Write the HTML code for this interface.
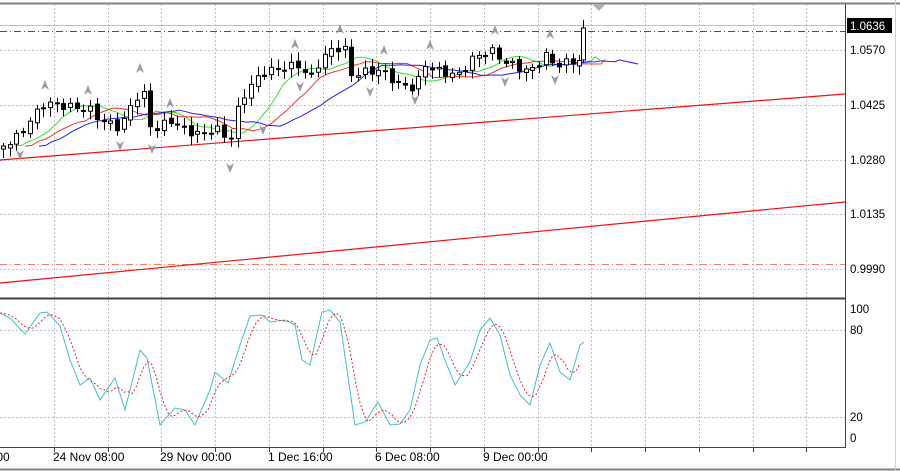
<!DOCTYPE html>
<html><head><meta charset="utf-8"><style>
html,body{margin:0;padding:0;background:#fff;width:900px;height:471px;overflow:hidden}
svg{display:block}
text{font-family:"Liberation Sans",sans-serif;font-size:11.5px;fill:#000}
text.t{font-size:12px}
</style></head><body>
<svg id="s" width="900" height="471" xmlns="http://www.w3.org/2000/svg">
<rect x="0" y="0" width="900" height="471" fill="#fff"/>
<g id="grid" stroke="#c0c0c0" stroke-dasharray="2,2" stroke-width="1"></g>
<line x1="0" y1="25.5" x2="845" y2="25.5" stroke="#c0c0c0"/>
<line x1="0" y1="31.5" x2="845" y2="31.5" stroke="#207020" stroke-dasharray="7,3,1,3"/>
<line x1="0" y1="264.5" x2="845" y2="264.5" stroke="#f08060" stroke-dasharray="7,3,1,3"/>
<line x1="0" y1="160" x2="845" y2="94" stroke="#f01010" stroke-width="1.2"/>
<line x1="0" y1="283" x2="845" y2="202" stroke="#f01010" stroke-width="1.2"/>
<g id="ma"></g>
<g id="candles"></g>
<g id="stoch"></g>
<line x1="0" y1="3.5" x2="900" y2="3.5" stroke="#808080" stroke-width="2"/>
<line x1="845.5" y1="4" x2="845.5" y2="447" stroke="#404040"/>
<line x1="0" y1="298.5" x2="846" y2="298.5" stroke="#404040" stroke-width="2"/>
<line x1="0" y1="447.5" x2="846" y2="447.5" stroke="#404040"/>
<line x1="0" y1="469.5" x2="900" y2="469.5" stroke="#808080" stroke-width="2"/>
<line x1="895.5" y1="0" x2="895.5" y2="471" stroke="#d0d0d0"/>
<g id="ticks" stroke="#404040"></g>
<rect x="847" y="18" width="45" height="15" fill="#000"/>
<text x="850" y="30" style="fill:#fff">1.0636</text>
<text x="850" y="54">1.0570</text>
<text x="850" y="109">1.0425</text>
<text x="850" y="164">1.0280</text>
<text x="850" y="218">1.0135</text>
<text x="850" y="273">0.9990</text>
<text x="850" y="313">100</text>
<text x="850" y="334">80</text>
<text x="850" y="421">20</text>
<text x="850" y="442">0</text>
<text class="t" x="-7" y="461">:00</text>
<text class="t" x="53" y="461">24 Nov 08:00</text>
<text class="t" x="160" y="461">29 Nov 00:00</text>
<text class="t" x="268" y="461">1 Dec 16:00</text>
<text class="t" x="375" y="461">6 Dec 08:00</text>
<text class="t" x="483" y="461">9 Dec 00:00</text>
<polygon points="592,4 606,4 599,11" fill="#b0b0b0"/>
</svg>
<script>
var NS="http://www.w3.org/2000/svg";
function el(p,t,a){var e=document.createElementNS(NS,t);for(var k in a)e.setAttribute(k,a[k]);document.getElementById(p).appendChild(e);return e;}
for(var k=1;k<16;k++){var x=Math.round(53.75*k)+.5;if(x>845)break;el('grid','line',{x1:x,y1:4,x2:x,y2:447});el('ticks','line',{x1:x,y1:447,x2:x,y2:452});}
[50,105,160,214,269,330,417].forEach(function(y){el('grid','line',{x1:0,y1:y+.5,x2:845,y2:y+.5});});
function interp(kp,x){for(var i=0;i<kp.length-1;i++){if(x>=kp[i][0]&&x<=kp[i+1][0]){var t=(x-kp[i][0])/(kp[i+1][0]-kp[i][0]);return kp[i][1]+t*(kp[i+1][1]-kp[i][1]);}}return kp[kp.length-1][1];}
var kp=[[0,148],[20,135],[30,120],[45,103],[60,105],[90,110],[100,120],[120,128],[135,97],[145,95],[150,125],[155,130],[170,120],[185,130],[200,135],[215,128],[230,140],[240,100],[255,80],[265,72],[280,68],[300,65],[310,80],[320,60],[335,47],[345,50],[350,75],[365,72],[380,70],[400,85],[415,88],[425,65],[440,72],[460,75],[470,60],[490,50],[505,62],[520,68],[530,72],[545,55],[555,65],[570,62],[578,60]];
var N=87,closes=[],xs=[];
for(var i=0;i<N;i++){var x=3+i*6.7;xs.push(x);closes.push(interp(kp,x)+Math.sin(i*2.3)*4);}
var opens=[closes[0]+3];for(i=1;i<N;i++)opens.push(closes[i-1]+Math.sin(i*1.7)*2);
xs.push(583);opens.push(60);closes.push(28);
var M=xs.length;
function ma(n,off){var p=[];for(var i=0;i<M;i++){var s=0,c=0;for(var j=Math.max(0,i-n+1);j<=i;j++){s+=closes[j];c++;}p.push([xs[i]+off,s/c]);}return p.filter(function(q){return q[0]<=640;});}
function pl(pts,col){el('ma','polyline',{points:pts.map(function(p){return p[0].toFixed(1)+','+p[1].toFixed(1)}).join(' '),fill:'none',stroke:col,'stroke-width':1});}
var g=ma(6,12);g.push([600,60]);pl(g,'#30e030');
var r=ma(10,22);pl(r,'#f03030');
var b=ma(15,36);b.push([638,64]);pl(b,'#2020f0');
for(i=0;i<M;i++){var o=opens[i],c=closes[i],hi=Math.min(o,c)-3-Math.abs(Math.sin(i*3.1))*6,lo=Math.max(o,c)+3+Math.abs(Math.cos(i*2.7))*6;if(i==M-1){hi=20;lo=63;}
var x=Math.round(xs[i])+.5;el('candles','line',{x1:x,y1:hi,x2:x,y2:lo,stroke:'#000'});
var t=Math.min(o,c),h=Math.max(Math.abs(o-c),1);el('candles','rect',{x:x-2,y:t,width:4,height:h,fill:c<o?'#fff':'#000',stroke:'#000','stroke-width':1});}
[[45,85,1],[140,68,1],[88,90,1],[170,103,1],[295,44,1],[340,29,1],[384,50,1],[430,45,1],[495,30,1],[550,34,1],[120,146,0],[152,149,0],[230,168,0],[263,130,0],[300,87,0],[370,92,0],[415,100,0],[505,82,0],[555,80,0],[20,155,0]].forEach(function(a){var x=a[0],y=a[1];el('candles','polygon',{points:a[2]?(x-4)+','+(y+5)+' '+x+','+(y-5)+' '+(x+4)+','+(y+5)+' '+x+','+(y+2):(x-4)+','+(y-5)+' '+x+','+(y+5)+' '+(x+4)+','+(y-5)+' '+x+','+(y-2),fill:'#9a9aa8'});});
var sk=[[0,313],[10,318],[25,334],[40,313],[47,312],[60,326],[70,360],[80,385],[90,378],[100,400],[115,378],[125,410],[140,350],[147,358],[160,425],[175,408],[185,410],[195,425],[210,390],[215,372],[228,383],[240,345],[250,316],[262,315],[270,322],[285,320],[295,325],[302,360],[310,365],[322,312],[330,310],[340,322],[355,425],[365,422],[378,402],[390,425],[400,424],[410,410],[420,365],[430,340],[437,338],[445,360],[455,385],[470,362],[480,330],[490,318],[500,335],[510,375],[520,395],[530,405],[540,365],[550,343],[560,372],[570,380],[580,345],[584,342]];
el('stoch','polyline',{points:sk.map(function(p){return p.join(',')}).join(' '),fill:'none',stroke:'#40c0c0','stroke-width':1});
var sg=[];for(var x=0;x<=580;x+=4){var s=0;for(var j=0;j<3;j++)s+=interp(sk,Math.max(0,x-j*6.5));sg.push([x,s/3]);}
el('stoch','polyline',{points:sg.map(function(p){return p[0]+','+p[1].toFixed(1)}).join(' '),fill:'none',stroke:'#f02020','stroke-width':1,'stroke-dasharray':'2,2'});
</script>
</body></html>
